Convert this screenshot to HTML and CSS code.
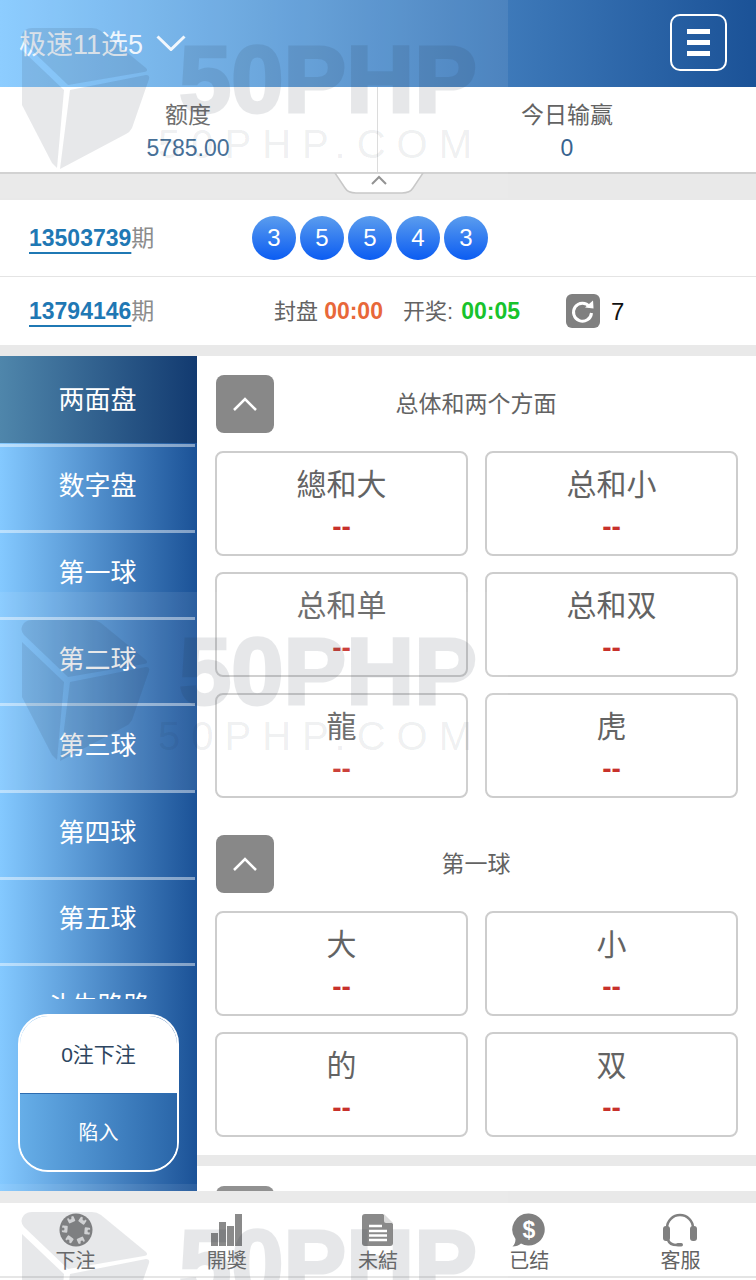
FILE: index.html
```html
<!DOCTYPE html>
<html lang="zh-CN">
<head>
    <meta charset="UTF-8">
    <meta name="viewport" content="width=device-width, initial-scale=1.0">
    <title>极速11选5</title>
    <link rel="stylesheet" href="styles.css">
</head>
<body>
    <div class="page">
        <header class="top-bar">
            <div class="game-name">
                <span>极速11选5</span>
                <svg class="game-arrow" width="30" height="16" viewBox="0 0 30 16"><path d="M1.500 1.500 15 14.500 28.500 1.500" /></svg>
            </div>
            <button class="menu-btn"><i></i><i></i><i></i></button>
        </header>

        <div class="account">
            <div class="account-col">
                <div class="account-label">额度</div>
                <div class="account-value">5785.00</div>
            </div>
            <div class="account-col">
                <div class="account-label">今日输赢</div>
                <div class="account-value">0</div>
            </div>
        </div>

        <div class="fold-band">
            <svg width="90" height="24" viewBox="0 0 90 24">
                <path class="fold-tab" d="M1 0 11 15Q14 20 22 20H68Q76 20 79 15L89 0Z" />
                <path class="fold-arrow" d="M38 11 45 4 52 11" />
            </svg>
        </div>

        <div class="draw-row draw-last">
            <div class="period"><u>13503739</u>期</div>
            <div class="balls">
                <span class="ball">3</span>
                <span class="ball">5</span>
                <span class="ball">5</span>
                <span class="ball">4</span>
                <span class="ball">3</span>
            </div>
        </div>

        <div class="draw-row draw-next">
            <div class="period"><u>13794146</u>期</div>
            <div class="timers">
                <span>封盘 <b class="time-close">00:00</b></span>
                <span>开奖: <b class="time-open">00:05</b></span>
            </div>
            <div class="refresh">
                <svg class="refresh-icon" width="34" height="34" viewBox="0 0 34 34">
                    <path d="M23.500 12.500A9 9 0 1 0 25.500 19" />
                    <polygon points="19,13.500 27,6.500 27.500,14.500" />
                </svg>
                <span>7</span>
            </div>
        </div>

        <main class="main">
            <aside class="sidebar">
                <nav class="side-menu">
                    <div class="side-item active">两面盘</div>
                    <div class="side-item">数字盘</div>
                    <div class="side-item">第一球</div>
                    <div class="side-item">第二球</div>
                    <div class="side-item">第三球</div>
                    <div class="side-item">第四球</div>
                    <div class="side-item">第五球</div>
                    <div class="side-item">斗牛路路</div>
                </nav>
                <div class="bet-wrap">
                    <div class="bet-box">
                        <div class="bet-count">0注下注</div>
                        <div class="bet-submit">陷入</div>
                    </div>
                </div>
            </aside>

            <div class="content">
                <section class="group">
                    <div class="group-head">
                        <button class="collapse-btn"><svg width="26" height="16" viewBox="0 0 26 16"><path d="M2 14 13 3 24 14" /></svg></button>
                        <div class="group-title">总体和两个方面</div>
                    </div>
                    <div class="cells">
                        <div class="cell"><div class="cell-name">總和大</div><div class="cell-odds">--</div></div>
                        <div class="cell"><div class="cell-name">总和小</div><div class="cell-odds">--</div></div>
                        <div class="cell"><div class="cell-name">总和单</div><div class="cell-odds">--</div></div>
                        <div class="cell"><div class="cell-name">总和双</div><div class="cell-odds">--</div></div>
                        <div class="cell"><div class="cell-name">龍</div><div class="cell-odds">--</div></div>
                        <div class="cell"><div class="cell-name">虎</div><div class="cell-odds">--</div></div>
                    </div>
                </section>

                <section class="group group-end">
                    <div class="group-head">
                        <button class="collapse-btn"><svg width="26" height="16" viewBox="0 0 26 16"><path d="M2 14 13 3 24 14" /></svg></button>
                        <div class="group-title">第一球</div>
                    </div>
                    <div class="cells">
                        <div class="cell"><div class="cell-name">大</div><div class="cell-odds">--</div></div>
                        <div class="cell"><div class="cell-name">小</div><div class="cell-odds">--</div></div>
                        <div class="cell"><div class="cell-name">的</div><div class="cell-odds">--</div></div>
                        <div class="cell"><div class="cell-name">双</div><div class="cell-odds">--</div></div>
                    </div>
                </section>

                <section class="group">
                    <div class="group-head">
                        <button class="collapse-btn"></button>
                    </div>
                </section>
            </div>
        </main>

        <footer class="tab-bar">
            <div class="tab">
                <svg width="36" height="34" viewBox="0 0 36 34">
                    <circle class="icon-fill" cx="18" cy="17" r="16.500" />
                    <g class="chip-marks">
                        <rect x="14.500" y="3" width="7" height="5.500" rx="1" transform="rotate(-25 18 17)" />
                        <rect x="14.500" y="3" width="7" height="5.500" rx="1" transform="rotate(35 18 17)" />
                        <rect x="14.500" y="3" width="7" height="5.500" rx="1" transform="rotate(95 18 17)" />
                        <rect x="14.500" y="3" width="7" height="5.500" rx="1" transform="rotate(155 18 17)" />
                        <rect x="14.500" y="3" width="7" height="5.500" rx="1" transform="rotate(215 18 17)" />
                        <rect x="14.500" y="3" width="7" height="5.500" rx="1" transform="rotate(275 18 17)" />
                    </g>
                    <g class="icon-fill">
                        <circle cx="12" cy="5" r="1.500" /><circle cx="26" cy="6" r="1.500" /><circle cx="31" cy="18" r="1.500" />
                        <circle cx="24" cy="29" r="1.500" /><circle cx="10" cy="28" r="1.500" /><circle cx="5" cy="16" r="1.500" />
                    </g>
                </svg>
                <span>下注</span>
            </div>
            <div class="tab">
                <svg width="36" height="34" viewBox="0 0 36 34">
                    <rect class="icon-fill" x="2" y="20" width="7" height="13" />
                    <rect class="icon-fill" x="10" y="9" width="7" height="24" />
                    <rect class="icon-fill" x="18" y="13" width="7" height="20" />
                    <rect class="icon-fill" x="26" y="1" width="7" height="32" />
                </svg>
                <span>開獎</span>
            </div>
            <div class="tab">
                <svg width="36" height="34" viewBox="0 0 36 34">
                    <path class="icon-fill" d="M5 1H23L33 11V30A3 3 0 0 1 30 33H5A3 3 0 0 1 2 30V4A3 3 0 0 1 5 1Z" />
                    <path class="doc-fold" d="M24 1 33 10H26A2 2 0 0 1 24 8Z" />
                    <path class="doc-lines" d="M9 13H22M9 18H27M9 22.500H27M9 27H27" />
                </svg>
                <span>未結</span>
            </div>
            <div class="tab">
                <svg width="36" height="34" viewBox="0 0 36 34">
                    <path class="icon-fill" d="M18 0.500A16 16 0 1 1 10 30.500C8 32.500 5 33.500 1.500 33.500 3.500 31.500 4.500 29.500 4.500 26A16 16 0 0 1 18 0.500Z" />
                    <text class="dollar" x="18" y="24.500">$</text>
                </svg>
                <span>已结</span>
            </div>
            <div class="tab">
                <svg width="36" height="34" viewBox="0 0 36 34">
                    <path class="head-band" d="M5 17V15A13 13 0 0 1 31 15V17" />
                    <rect class="icon-fill" x="1" y="13" width="7" height="15" rx="3" />
                    <rect class="icon-fill" x="28" y="13" width="7" height="15" rx="3" />
                    <path class="head-band" d="M6 27C7 30 10 32 15 32" />
                    <rect class="icon-fill" x="14" y="30" width="7" height="3.500" rx="1.700" />
                </svg>
                <span>客服</span>
            </div>
        </footer>

        <!-- watermark tiles lie over the whole page -->
        <div class="watermark">
            <svg class="wm-tile" width="508" height="198" viewBox="0 0 508 198">
                <path d="M32 28H92Q97 28 101 31L146 68Q149 71 144 72L68 85 24 43Q19 37 24 31Q27 28 32 28Z" />
                <path d="M22 50 64 90 57 168 52 163 22 105Z" />
                <path d="M70 90 146 75Q150 75 149 79L132 128Q130 132 126 134L60 169Z" />
                <text class="wm-big" x="179" y="112">50PHP</text>
                <text class="wm-small" x="158" y="158">50PHP.COM</text>
            </svg>
            <svg class="wm-tile" width="508" height="198" viewBox="0 0 508 198">
                <path d="M32 28H92Q97 28 101 31L146 68Q149 71 144 72L68 85 24 43Q19 37 24 31Q27 28 32 28Z" />
                <path d="M22 50 64 90 57 168 52 163 22 105Z" />
                <path d="M70 90 146 75Q150 75 149 79L132 128Q130 132 126 134L60 169Z" />
                <text class="wm-big" x="179" y="112">50PHP</text>
                <text class="wm-small" x="158" y="158">50PHP.COM</text>
            </svg>
            <svg class="wm-tile" width="508" height="198" viewBox="0 0 508 198">
                <path d="M32 28H92Q97 28 101 31L146 68Q149 71 144 72L68 85 24 43Q19 37 24 31Q27 28 32 28Z" />
                <path d="M22 50 64 90 57 168 52 163 22 105Z" />
                <path d="M70 90 146 75Q150 75 149 79L132 128Q130 132 126 134L60 169Z" />
                <text class="wm-big" x="179" y="112">50PHP</text>
                <text class="wm-small" x="158" y="158">50PHP.COM</text>
            </svg>
        </div>
    </div>
</body>
</html>
```

FILE: styles.css
```css
:root {
    --blue-gradient: linear-gradient(to right, #84c9ff, #1b5297);
    --band-color: #e9e9e9;
    --text-color: #636363;
    --icon-color: #808080;
}
* {
    box-sizing: border-box;
}
body {
    margin: 0;
    background-color: white;
    font-family: "Liberation Sans", "Noto Sans CJK SC", sans-serif;
    color: var(--text-color);
}
.page {
    position: relative;
    width: 756px;
    height: 1280px;
    overflow: hidden;
    display: flex;
    flex-direction: column;
}

/* top bar */
.top-bar {
    height: 87px;
    flex: none;
    display: flex;
    align-items: center;
    justify-content: space-between;
    padding: 0 29px 2px 19px;
    background: var(--blue-gradient);
}
.game-name {
    display: flex;
    align-items: center;
    gap: 13px;
    font-size: 27px;
    color: rgba(255,255,255,0.9);
}
.game-arrow {
    margin-top: 1px;
    fill: none;
    stroke: rgba(255,255,255,0.9);
    stroke-width: 3;
}
.menu-btn {
    width: 57px;
    height: 57px;
    padding: 0;
    display: flex;
    flex-direction: column;
    align-items: center;
    justify-content: center;
    gap: 6px;
    background: transparent;
    border: 2px solid white;
    border-radius: 10px;
}
.menu-btn i {
    width: 23px;
    height: 5px;
    background-color: white;
}

/* account */
.account {
    height: 85px;
    flex: none;
    display: flex;
    background: linear-gradient(#d9d9d9, #d9d9d9) no-repeat 377px 0 / 1px 100%;
}
.account-col {
    width: 50%;
    text-align: center;
    padding-top: 13px;
}
.account-label {
    font-size: 23px;
    line-height: 30px;
}
.account-value {
    font-size: 23px;
    line-height: 36px;
    color: #38648f;
}
.account-col:first-child {
    padding-right: 2px;
}
.fold-band {
    height: 28px;
    flex: none;
    display: flex;
    justify-content: center;
    background-color: var(--band-color);
    border-top: 2px solid #cfcfcf;
}
.fold-band svg {
    margin-left: 2px;
    margin-top: -1px;
}
.fold-tab {
    fill: white;
    stroke: #c4c4c4;
    stroke-width: 1.500;
}
.fold-arrow {
    fill: none;
    stroke: #8a8a8a;
    stroke-width: 2;
}

/* draw rows */
.draw-row {
    flex: none;
    display: flex;
    align-items: center;
    padding-left: 29px;
}
.draw-last {
    height: 77px;
    border-bottom: 1px solid #e4e4e4;
}
.draw-next {
    height: 68px;
}
.period {
    width: 223px;
    flex: none;
    padding-bottom: 5px;
    font-size: 23px;
    color: #8c8c8c;
}
.period u {
    font-weight: bold;
    color: #1f78b4;
    text-decoration-thickness: 2px;
    text-underline-offset: 6px;
}
.balls {
    display: flex;
    gap: 4px;
}
.ball {
    width: 44px;
    height: 44px;
    border-radius: 50%;
    text-align: center;
    line-height: 44px;
    font-size: 24px;
    color: white;
    background: linear-gradient(#5b9dee, #0b5cf2);
}
.timers {
    display: flex;
    gap: 20px;
    margin-left: 22px;
    padding-bottom: 5px;
    width: 292px;
    flex: none;
    font-size: 22px;
}
.timers b {
    font-size: 23px;
}
.timers span + span b {
    margin-left: 2px;
}
.time-close {
    color: #e8683a;
}
.time-open {
    color: #18c32c;
}
.refresh {
    display: flex;
    align-items: center;
    gap: 11px;
    font-size: 24px;
    color: #111;
}
.refresh span {
    margin-top: 1px;
}
.refresh-icon {
    background-color: var(--icon-color);
    border-radius: 6px;
}
.refresh-icon path {
    fill: none;
    stroke: white;
    stroke-width: 3;
}
.refresh-icon polygon {
    fill: white;
}

/* sidebar */
.main {
    height: 846px;
    flex: none;
    display: flex;
    border-top: 11px solid var(--band-color);
}
.sidebar {
    width: 197px;
    flex: none;
    height: 835px;
    display: flex;
    flex-direction: column;
}
.side-menu {
    height: 643px;
    flex: none;
    overflow: hidden;
}
.side-item {
    height: 86.600px;
    padding: 0 2px 4px 0;
    display: flex;
    align-items: center;
    justify-content: center;
    font-size: 26px;
    color: white;
    background: linear-gradient(rgba(255,255,255,0.45), rgba(255,255,255,0.45)) no-repeat 0 1px / 195px 3px, var(--blue-gradient);
}
.side-item.active {
    background: linear-gradient(to right, #4f86ab, #123a70);
}
.bet-wrap {
    flex: 1;
    padding: 15px 18px 19px;
    background: var(--blue-gradient);
}
.bet-box {
    height: 158px;
    display: flex;
    flex-direction: column;
    border: 2px solid white;
    border-radius: 30px;
    overflow: hidden;
    text-align: center;
    font-size: 21px;
}
.bet-count {
    height: 77px;
    line-height: 77px;
    flex: none;
    background-color: white;
    color: #2d4560;
}
.bet-submit {
    flex: 1;
    padding-top: 9px;
    line-height: 60px;
    font-size: 20px;
    color: white;
    background: linear-gradient(to right, #66aee8, #2a66a9);
    border-top: 1px solid #2d6cb0;
}

/* betting groups */
.content {
    flex: 1;
    height: 835px;
    overflow: hidden;
}
.group {
    padding: 19px 18px 37px 17px;
}
.group-end {
    padding-bottom: 18px;
    border-bottom: 11px solid var(--band-color);
}
.group + .group {
    padding-top: 0;
}
.group-end + .group {
    padding-top: 20px;
}
.group-head {
    display: flex;
    align-items: center;
}
.collapse-btn {
    width: 58px;
    height: 58px;
    flex: none;
    margin-left: 2px;
    padding: 0;
    display: flex;
    align-items: center;
    justify-content: center;
    background-color: #888;
    border: none;
    border-radius: 8px;
}
.collapse-btn svg {
    fill: none;
    stroke: white;
    stroke-width: 2.500;
}
.group-title {
    flex: 1;
    padding-right: 60px;
    margin-top: -4px;
    text-align: center;
    font-size: 23px;
}
.cells {
    margin-top: 18px;
    margin-left: 1px;
    display: grid;
    grid-template-columns: 253px 253px;
    grid-auto-rows: 105px;
    column-gap: 17px;
    row-gap: 16px;
}
.cell {
    border: 2px solid #cdcdcd;
    border-radius: 8px;
    text-align: center;
    padding-top: 10px;
}
.cell-name {
    font-size: 30px;
    line-height: 44px;
}
.cell-odds {
    margin-top: 4px;
    font-size: 28px;
    line-height: 32px;
    font-weight: bold;
    color: #c8312b;
}

/* bottom tabs */
.tab-bar {
    height: 87px;
    flex: none;
    display: flex;
    border-top: 12px solid var(--band-color);
    border-bottom: 2px solid #e4e4e4;
}
.tab {
    flex: 1;
    display: flex;
    flex-direction: column;
    align-items: center;
    padding-top: 10px;
    font-size: 20px;
    line-height: 28px;
}
.tab svg {
    flex: none;
}
.icon-fill {
    fill: var(--icon-color);
}
.chip-marks {
    fill: #e4e4e4;
}
.doc-fold {
    fill: #d8d8d8;
}
.doc-lines {
    fill: none;
    stroke: white;
    stroke-width: 2.500;
}
.dollar {
    fill: white;
    font-size: 23px;
    font-weight: bold;
    text-anchor: middle;
}
.head-band {
    fill: none;
    stroke: var(--icon-color);
    stroke-width: 2.500;
}

/* watermark */
.watermark {
    position: absolute;
    top: 0;
    left: 0;
    display: flex;
    flex-direction: column;
    gap: 394px;
    pointer-events: none;
}
.wm-tile {
    flex: none;
    display: block;
    background-color: rgba(255,255,255,0.08);
    fill: rgba(25,40,60,0.105);
}
.wm-big {
    font-size: 94px;
    font-weight: bold;
    fill: #1d2a3a;
    stroke: #1d2a3a;
    stroke-width: 3;
    opacity: 0.105;
}
.wm-small {
    font-size: 40px;
    letter-spacing: 11px;
    fill: rgba(25,40,60,0.08);
}
```
